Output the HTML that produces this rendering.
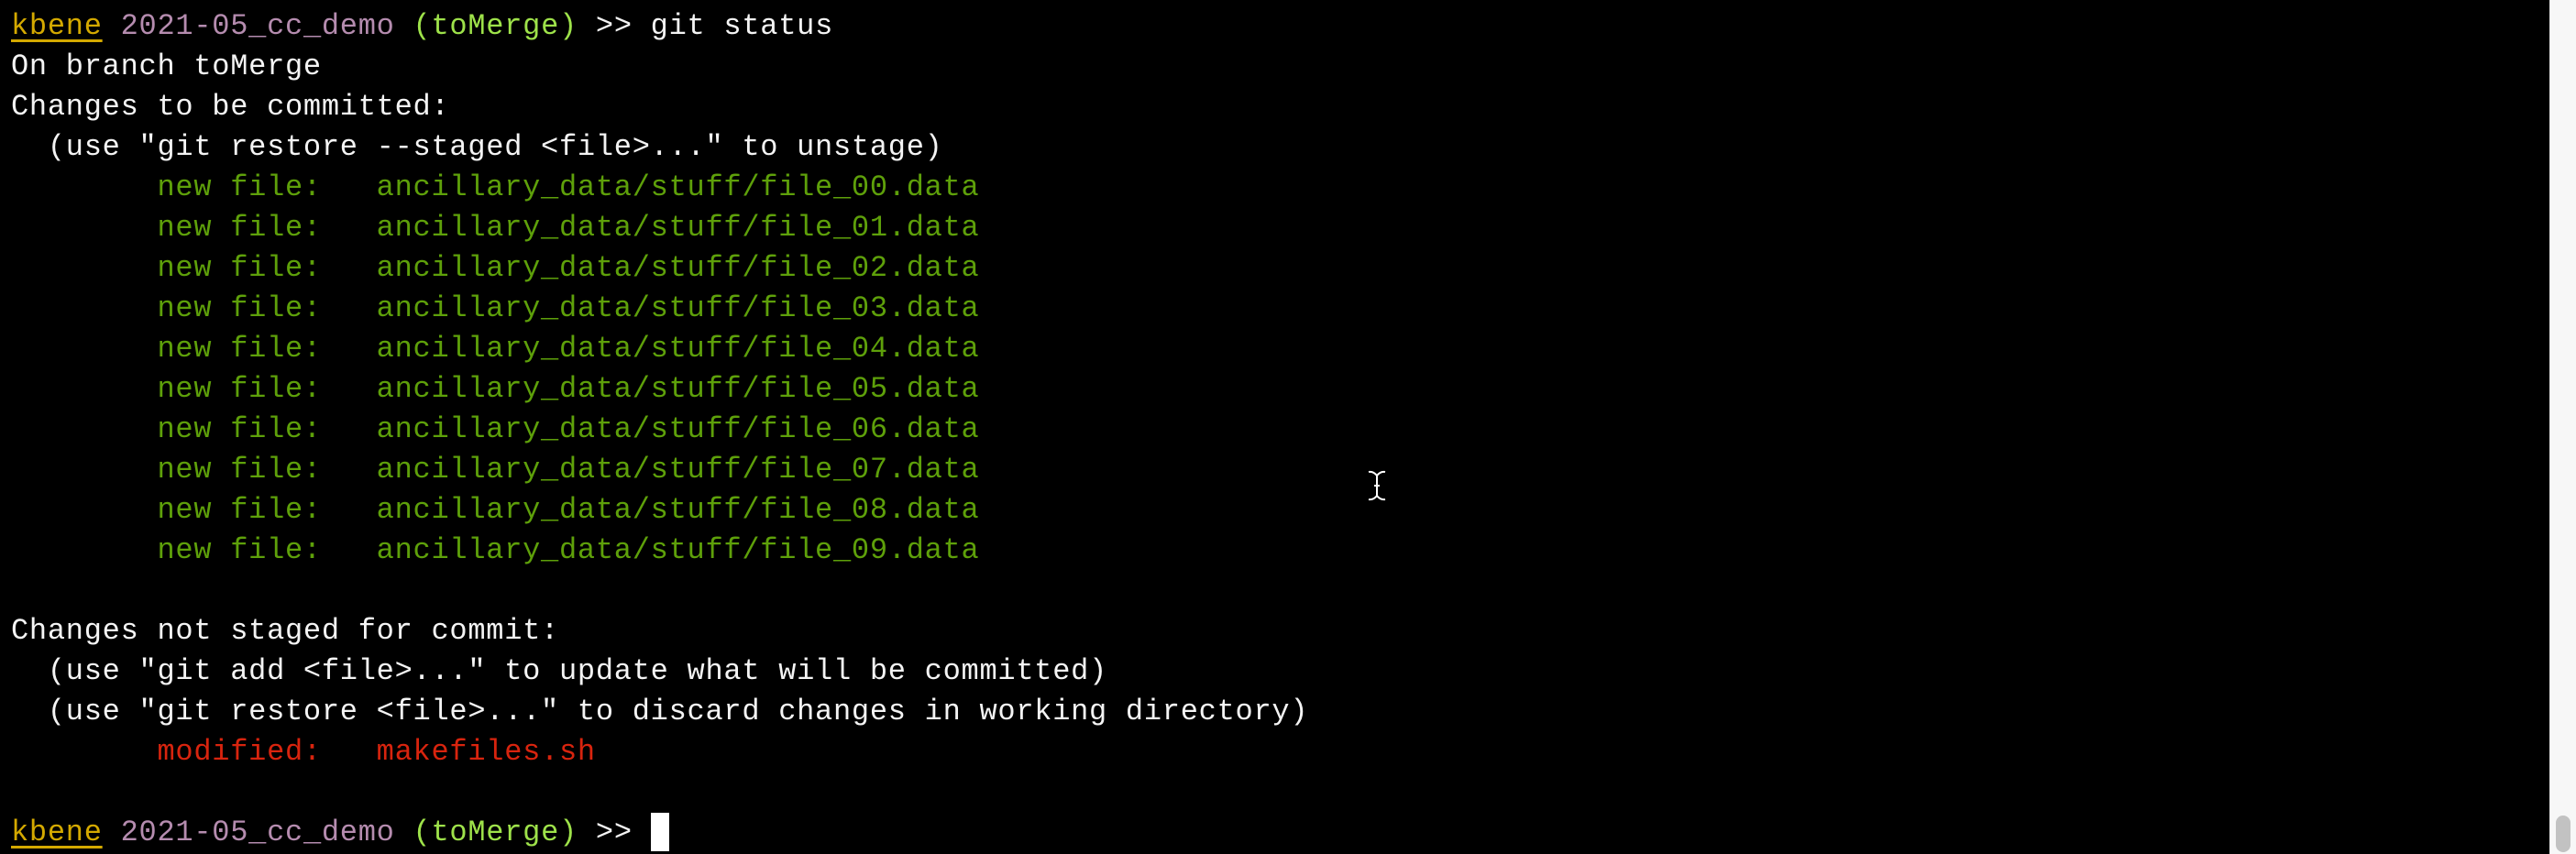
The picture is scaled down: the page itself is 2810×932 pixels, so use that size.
<!DOCTYPE html>
<html><head><meta charset="utf-8"><style>
html,body{margin:0;padding:0;background:#000;width:2810px;height:932px;overflow:hidden;position:relative}
pre{margin:0;position:absolute;left:12px;top:7px;font-family:"Liberation Mono",monospace;font-size:32px;letter-spacing:0.73px;line-height:44px;color:#f4f4f4}
.y{color:#d4a900;text-decoration:underline;text-decoration-thickness:3px;text-underline-offset:6px}
.p{color:#b58caf}.l{color:#9ee24a}.g{color:#5ea00a}.r{color:#d8240e}
.cur{display:inline-block;width:20px;height:42px;background:#fff;vertical-align:-12px}
.sb{position:absolute;left:2781px;top:0;width:29px;height:932px;background:#f7f7f7;border-left:1px solid #e4e4e4}
.th{position:absolute;left:2788px;top:890px;width:16px;height:40px;border-radius:8px;background:#c2c2c2}
</style></head><body>
<pre><span class="y">kbene</span> <span class="p">2021-05_cc_demo</span> <span class="l">(toMerge)</span> &gt;&gt; git status
On branch toMerge
Changes to be committed:
  (use "git restore --staged &lt;file&gt;..." to unstage)
<span class="g">        new file:   ancillary_data/stuff/file_00.data
        new file:   ancillary_data/stuff/file_01.data
        new file:   ancillary_data/stuff/file_02.data
        new file:   ancillary_data/stuff/file_03.data
        new file:   ancillary_data/stuff/file_04.data
        new file:   ancillary_data/stuff/file_05.data
        new file:   ancillary_data/stuff/file_06.data
        new file:   ancillary_data/stuff/file_07.data
        new file:   ancillary_data/stuff/file_08.data
        new file:   ancillary_data/stuff/file_09.data</span>

Changes not staged for commit:
  (use "git add &lt;file&gt;..." to update what will be committed)
  (use "git restore &lt;file&gt;..." to discard changes in working directory)
<span class="r">        modified:   makefiles.sh</span>

<span class="y">kbene</span> <span class="p">2021-05_cc_demo</span> <span class="l">(toMerge)</span> &gt;&gt; <span class="cur"></span></pre>
<svg style="position:absolute;left:1490px;top:510px" width="24" height="40" viewBox="0 0 24 40">
<path d="M3 5 Q8 4 12 9 Q16 4 21 5 M12 9 V31 M3 35 Q8 36 12 31 Q16 36 21 35 M9 20 H15" fill="none" stroke="#000" stroke-width="5"/>
<path d="M3 5 Q8 4 12 9 Q16 4 21 5 M12 9 V31 M3 35 Q8 36 12 31 Q16 36 21 35 M9 20 H15" fill="none" stroke="#fff" stroke-width="2"/>
</svg>
<div class="sb"></div><div class="th"></div>
</body></html>
